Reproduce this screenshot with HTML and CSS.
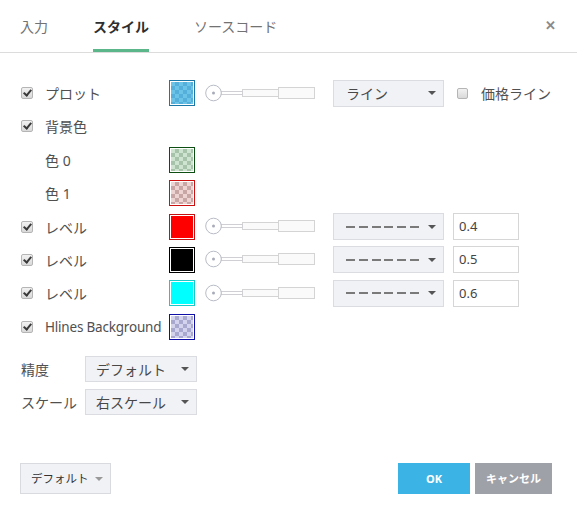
FILE: index.html
```html
<!DOCTYPE html>
<html lang="ja">
<head>
    <meta charset="UTF-8">
    <title>スタイル</title>
    <link rel="stylesheet" href="styles.css">
</head>
<body>
<div class="dialog">
    <div class="tabs">
        <span class="tab">入力</span>
        <span class="tab tab-active">スタイル</span>
        <span class="tab">ソースコード</span>
        <span class="close">&#x2715;</span>
    </div>

    <div class="content">
        <!-- プロット -->
        <div class="row">
            <span class="chk checked"></span>
            <span class="label">プロット</span>
            <span class="swatch sw-blue"></span>
            <span class="slider">
                <svg width="110" height="20" viewBox="0 0 110 20">
                    <rect x="73.5" y="4.5" width="36" height="11" fill="#fafafa" stroke="#d4d4d4"/>
                    <rect x="37.5" y="6.5" width="36" height="7" fill="#fafafa" stroke="#d4d4d4"/>
                    <rect x="16" y="8.5" width="21.5" height="3" fill="#fff" stroke="#d0d0d4"/>
                    <circle cx="8.5" cy="10" r="7.8" fill="#fff" stroke="#b9bcc6"/>
                    <circle cx="8.5" cy="10" r="1.5" fill="#a8acb8"/>
                </svg>
            </span>
            <span class="select sel-wide">ライン<i class="caret"></i></span>
            <span class="chk chk-price"></span>
            <span class="label-price">価格ライン</span>
        </div>
        <!-- 背景色 -->
        <div class="row">
            <span class="chk checked"></span>
            <span class="label">背景色</span>
        </div>
        <div class="row">
            <span class="chk chk-none"></span>
            <span class="label">色 0</span>
            <span class="swatch sw-green"></span>
        </div>
        <div class="row">
            <span class="chk chk-none"></span>
            <span class="label">色 1</span>
            <span class="swatch sw-pink"></span>
        </div>
        <!-- レベル -->
        <div class="row">
            <span class="chk checked"></span>
            <span class="label">レベル</span>
            <span class="swatch sw-red"></span>
            <span class="slider">
                <svg width="110" height="20" viewBox="0 0 110 20">
                    <rect x="73.5" y="4.5" width="36" height="11" fill="#fafafa" stroke="#d4d4d4"/>
                    <rect x="37.5" y="6.5" width="36" height="7" fill="#fafafa" stroke="#d4d4d4"/>
                    <rect x="16" y="8.5" width="21.5" height="3" fill="#fff" stroke="#d0d0d4"/>
                    <circle cx="8.5" cy="10" r="7.8" fill="#fff" stroke="#b9bcc6"/>
                    <circle cx="8.5" cy="10" r="1.5" fill="#a8acb8"/>
                </svg>
            </span>
            <span class="select sel-wide"><i class="dashes"></i><i class="caret"></i></span>
            <span class="num">0.4</span>
        </div>
        <div class="row">
            <span class="chk checked"></span>
            <span class="label">レベル</span>
            <span class="swatch sw-black"></span>
            <span class="slider">
                <svg width="110" height="20" viewBox="0 0 110 20">
                    <rect x="73.5" y="4.5" width="36" height="11" fill="#fafafa" stroke="#d4d4d4"/>
                    <rect x="37.5" y="6.5" width="36" height="7" fill="#fafafa" stroke="#d4d4d4"/>
                    <rect x="16" y="8.5" width="21.5" height="3" fill="#fff" stroke="#d0d0d4"/>
                    <circle cx="8.5" cy="10" r="7.8" fill="#fff" stroke="#b9bcc6"/>
                    <circle cx="8.5" cy="10" r="1.5" fill="#a8acb8"/>
                </svg>
            </span>
            <span class="select sel-wide"><i class="dashes"></i><i class="caret"></i></span>
            <span class="num">0.5</span>
        </div>
        <div class="row">
            <span class="chk checked"></span>
            <span class="label">レベル</span>
            <span class="swatch sw-cyan"></span>
            <span class="slider">
                <svg width="110" height="20" viewBox="0 0 110 20">
                    <rect x="73.5" y="4.5" width="36" height="11" fill="#fafafa" stroke="#d4d4d4"/>
                    <rect x="37.5" y="6.5" width="36" height="7" fill="#fafafa" stroke="#d4d4d4"/>
                    <rect x="16" y="8.5" width="21.5" height="3" fill="#fff" stroke="#d0d0d4"/>
                    <circle cx="8.5" cy="10" r="7.8" fill="#fff" stroke="#b9bcc6"/>
                    <circle cx="8.5" cy="10" r="1.5" fill="#a8acb8"/>
                </svg>
            </span>
            <span class="select sel-wide"><i class="dashes"></i><i class="caret"></i></span>
            <span class="num">0.6</span>
        </div>
        <div class="row">
            <span class="chk checked"></span>
            <span class="label label-latin">Hlines Background</span>
            <span class="swatch sw-lav"></span>
        </div>

        <!-- 精度 / スケール -->
        <div class="opts">
            <div class="opt-row">
                <span class="opt-label">精度</span>
                <span class="select sel-small">デフォルト<i class="caret"></i></span>
            </div>
            <div class="opt-row">
                <span class="opt-label">スケール</span>
                <span class="select sel-small">右スケール<i class="caret"></i></span>
            </div>
        </div>
    </div>

    <div class="footer">
        <span class="btn-default">デフォルト<i class="caret caret-light"></i></span>
        <div class="footer-right">
            <span class="btn btn-ok">OK</span>
            <span class="btn btn-cancel">キャンセル</span>
        </div>
    </div>
</div>
</body>
</html>
```

FILE: styles.css
```css
body{
    margin: 0;
    background: #fff;
    font-family: "Noto Sans", "Noto Sans CJK JP", sans-serif;
    color: #4a4a4a;
}
.dialog{
    width: 577px;
    height: 514px;
    position: relative;
}
.tabs{
    display: flex;
    align-items: flex-end;
    height: 53px;
    padding-left: 20px;
    border-bottom: 1px solid #dcdcdc;
    box-sizing: border-box;
}
.tab{
    font-size: 14px;
    line-height: 20px;
    color: #727272;
    padding-bottom: 12px;
    margin-right: 45px;
    border-bottom: 3px solid transparent;
}
.tab-active{
    color: #2f2f2f;
    font-weight: bold;
    border-bottom-color: #5bb68a;
}
.close{
    margin-left: auto;
    margin-right: 21px;
    align-self: flex-start;
    margin-top: 16px;
    font-size: 13px;
    font-weight: bold;
    color: #8a8a8a;
}

.content{
    padding: 27px 0 0 21px;
}
.row{
    display: flex;
    align-items: center;
    height: 26px;
    margin-bottom: 7.4px;
}
.chk{
    width: 12px;
    height: 12px;
    box-sizing: border-box;
    border: 1px solid #b5b5b5;
    border-radius: 2px;
    background: linear-gradient(#f2f2f2, #d9d9d9);
    margin-right: 12px;
    position: relative;
}
.chk.checked::after{
    content: "";
    position: absolute;
    left: 3px;
    top: 0px;
    width: 3px;
    height: 6px;
    border: solid #3a3a3a;
    border-width: 0 2px 2px 0;
    transform: rotate(40deg);
}
.chk-none{
    visibility: hidden;
}
.label{
    width: 124px;
    font-size: 14px;
    color: #505050;
}
.label-latin{
    font-size: 13.5px;
    letter-spacing: -0.2px;
}
.swatch{
    width: 26px;
    height: 26px;
    box-sizing: border-box;
    border: 1px solid;
    padding: 1px;
    background-clip: content-box;
    background-origin: content-box;
}
.sw-blue{
    border-color: #1b78a6;
    background-image: repeating-conic-gradient(#54b0db 0 25%, #6cc3e8 0 50%);
    background-size: 8px 8px;
}
.sw-green{
    border-color: #0d4f12;
    background-image: repeating-conic-gradient(#a7c4aa 0 25%, #cfe3d1 0 50%);
    background-size: 8px 8px;
}
.sw-pink{
    border-color: #cc1010;
    background-image: repeating-conic-gradient(#c9a6a6 0 25%, #eed3d3 0 50%);
    background-size: 8px 8px;
}
.sw-lav{
    border-color: #1010a8;
    background-image: repeating-conic-gradient(#a9a9cf 0 25%, #d3d3ee 0 50%);
    background-size: 8px 8px;
}
.sw-red{
    border-color: #c41010;
    background: #ff0000;
    background-clip: content-box;
}
.sw-black{
    border-color: #000;
    background: #000;
    background-clip: content-box;
}
.sw-cyan{
    border-color: #19c8c8;
    background: #00ffff;
    background-clip: content-box;
}
.slider{
    display: flex;
    margin-left: 10px;
    margin-right: 18px;
    margin-top: -1px;
}
.select{
    position: relative;
    display: flex;
    align-items: center;
    box-sizing: border-box;
    height: 27px;
    background: #f1f2f6;
    border: 1px solid #dadce2;
    font-size: 14px;
    color: #484848;
    padding-left: 12px;
}
.sel-wide{
    width: 111px;
}
.sel-small{
    width: 112px;
    height: 26px;
    padding-left: 10px;
}
.caret{
    position: absolute;
    right: 7px;
    top: 50%;
    margin-top: -2px;
    width: 0;
    height: 0;
    border-left: 4px solid transparent;
    border-right: 4px solid transparent;
    border-top: 4px solid #555;
}
.caret-light{
    border-top-color: #999;
    right: 7px;
}
.dashes{
    display: block;
    width: 75px;
    height: 2px;
    background: repeating-linear-gradient(90deg, #7a7a7a 0 9px, transparent 9px 12.8px);
}
.num{
    box-sizing: border-box;
    width: 66px;
    height: 27px;
    margin-left: 9px;
    border: 1px solid #d6d6d6;
    font-size: 13px;
    line-height: 25px;
    padding-left: 5px;
    color: #444;
}
.chk-price{
    margin-left: 13px;
    margin-right: 13px;
    width: 11px;
    height: 11px;
}
.label-price{
    font-size: 14px;
    color: #505050;
}

.opts{
    padding-top: 9px;
}
.opt-row{
    display: flex;
    align-items: center;
    margin-bottom: 7px;
}
.opt-label{
    width: 64px;
    font-size: 14px;
    color: #505050;
}

.footer{
    position: absolute;
    left: 20px;
    right: 25px;
    top: 463px;
    display: flex;
    justify-content: space-between;
}
.btn-default{
    position: relative;
    box-sizing: border-box;
    width: 91px;
    height: 31px;
    background: #f1f2f6;
    border: 1px solid #d8dae0;
    font-size: 11.5px;
    color: #333;
    line-height: 29px;
    padding-left: 10px;
}
.footer-right{
    display: flex;
    gap: 5px;
}
.btn{
    height: 31px;
    line-height: 31px;
    text-align: center;
    color: #fff;
    font-size: 11px;
    font-weight: bold;
}
.btn-ok{
    width: 72px;
    background: #3cb3e5;
}
.btn-cancel{
    width: 77px;
    background: #9fa1a8;
}
```
